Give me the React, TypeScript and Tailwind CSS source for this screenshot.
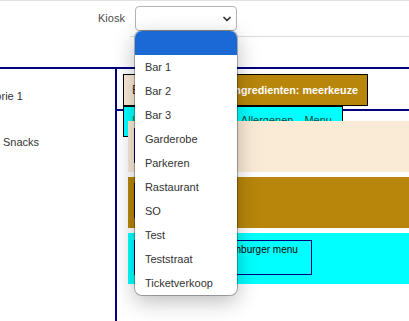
import { ChevronDown } from "lucide-react"

const kiosks = ["", "Bar 1", "Bar 2", "Bar 3", "Garderobe", "Parkeren", "Rastaurant", "SO", "Test", "Teststraat", "Ticketverkoop"]

const tabs = ["Ingredienten", "Extra", "Allergenen", "Menu"]

export default function App() {
  return (
    <div className="relative h-[321px] w-[409px] overflow-hidden bg-white font-['Liberation_Sans',Arial,sans-serif] text-[11px] leading-[13px] text-[#333]">
      {/* Top bar */}
      <header className="border-t border-[#e2e2e2]">
        <div className="flex h-[35px] items-center">
          <span className="ml-[98px] text-[#4d4d4d]">Kiosk</span>
          <div className="relative z-20 ml-[10px]">
            <div className="flex h-[25px] w-[102px] items-center justify-end rounded-[4px] border border-[#b4b4b4] bg-white pr-[3px]">
              <ChevronDown size={12} strokeWidth={3.5} className="text-[#333]" aria-hidden="true" />
            </div>
            <ul className="absolute left-0 top-full w-[102px] overflow-hidden rounded-[7px] bg-white shadow-[0_0_0_1px_rgba(0,0,0,0.28),0_6px_22px_rgba(0,0,0,0.28)]">
              {kiosks.map((k, i) => (
                <li
                  key={i}
                  className={`flex h-[24px] items-center pl-[10px] ${i === 0 ? "bg-[#1a69d4]" : "text-[#333]"}`}
                >
                  {k}
                </li>
              ))}
            </ul>
          </div>
        </div>
        <div className="ml-[130px] border-t border-[#dcdcdc]" />
      </header>

      <div className="h-[30px]" />

      <div className="flex border-t-2 border-[#000080]">
        {/* Categories */}
        <aside className="w-[115px] shrink-0 pt-[21px]">
          <p className="-ml-[34px] whitespace-nowrap">Categorie 1</p>
          <p className="ml-[3px] mt-[33px]">Snacks</p>
        </aside>

        {/* Product editor */}
        <main className="h-[260px] flex-1 border-l-2 border-[#000080]">
          <div className="border-b-2 border-[#000080] pb-[3px] pt-[5px]">
            <div className="ml-[6px] flex h-[32px] w-[245px] border border-black">
              <div className="flex w-[95px] items-center bg-[#faebd7] pl-[8px] text-[12px] text-[#3a2a10]">Broodjes</div>
              <div className="flex flex-1 items-center justify-end bg-[#b8860b] pr-[9px] text-[10.75px] font-bold text-white">
                Ingredienten: meerkeuze
              </div>
            </div>
          </div>

          <div className="relative -mt-[5px] ml-[6px] flex h-[31px] w-[220px] gap-[11px] border border-black bg-[#00ffff] pl-[8px] pt-[7px]">
            {tabs.map((t, i) => (
              <span key={t} className={i === 0 ? "text-[#0a8a2a]" : "text-[#1d4a36]"}>
                {t}
              </span>
            ))}
          </div>

          <div className="relative -mt-[16px] ml-[11px] flex flex-col gap-[5px]">
            <div className="h-[51px] bg-[#faebd7] pl-[6px] pt-[7px]">
              <div className="h-[35px] w-[90px] border border-[#000080]" />
            </div>
            <div className="h-[51px] bg-[#b8860b] pl-[6px] pt-[6px]">
              <div className="h-[35px] w-[90px] border border-[#000080]" />
            </div>
            <div className="h-[51px] bg-[#00ffff] pl-[6px] pt-[7px]">
              <div className="h-[35px] w-[178px] border border-[#000080] pl-[85px] pt-[2px] text-[10px] text-black">
                Hamburger menu
              </div>
            </div>
          </div>
        </main>
      </div>
    </div>
  )
}
